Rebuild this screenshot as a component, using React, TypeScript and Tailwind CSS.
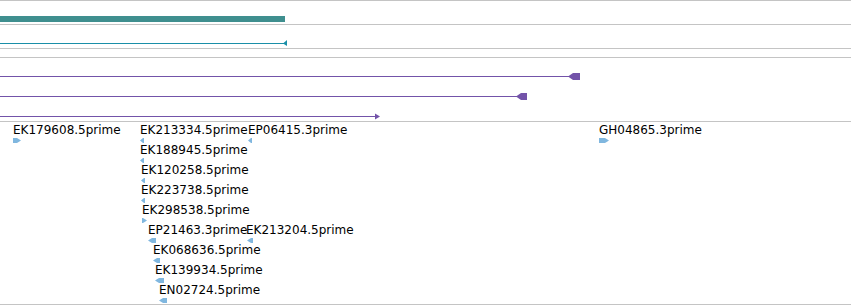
import React from 'react'

type Feat = { label: string; x: number; tx?: number; row: number; w: number; dir: 'l' | 'r' }

const feats: Feat[] = [
  { label: 'EK179608.5prime', x: 13, row: 0, w: 8, dir: 'r' },
  { label: 'EK213334.5prime', x: 140, row: 0, w: 4, dir: 'l' },
  { label: 'EP06415.3prime', x: 248, row: 0, w: 4, dir: 'l' },
  { label: 'GH04865.3prime', x: 599, row: 0, w: 10, dir: 'r' },
  { label: 'EK188945.5prime', x: 140, row: 1, w: 4, dir: 'l' },
  { label: 'EK120258.5prime', x: 141, row: 2, w: 4, dir: 'l' },
  { label: 'EK223738.5prime', x: 141, row: 3, w: 4, dir: 'l' },
  { label: 'EK298538.5prime', x: 142, row: 4, w: 5, dir: 'r' },
  { label: 'EP21463.3prime', x: 148, row: 5, w: 8, dir: 'l' },
  { label: 'EK213204.5prime', x: 247, tx: 246, row: 5, w: 6, dir: 'l' },
  { label: 'EK068636.5prime', x: 153, row: 6, w: 7, dir: 'l' },
  { label: 'EK139934.5prime', x: 155, row: 7, w: 9, dir: 'l' },
  { label: 'EN02724.5prime', x: 159, row: 8, w: 8, dir: 'l' },
]

// little strand glyph under each label
function glyph(f: Feat) {
  const y = 16 + f.row * 20
  const { x, w } = f
  const tip = Math.min(4, w - 1)
  const pts =
    f.dir === 'r'
      ? `${x},${y} ${x + w - tip},${y} ${x + w},${y + 2.5} ${x + w - tip},${y + 5} ${x},${y + 5}`
      : `${x + w},${y} ${x + tip},${y} ${x},${y + 2.5} ${x + tip},${y + 5} ${x + w},${y + 5}`
  return <polygon key={f.label + 'g'} points={pts} fill="#80b7df" />
}

export default function App() {
  return (
    <div className="w-[851px] h-[305px] bg-white overflow-hidden border-t border-[#c4c4c4]" style={{ fontFamily: '"DejaVu Sans", sans-serif' }}>
      {/* gene track */}
      <div className="relative h-[24px] border-b border-[#c4c4c4]">
        <div className="absolute left-0 top-[15px] w-[285px] h-[6px] bg-[#3f8f8f]" />
      </div>

      {/* transcript track */}
      <div className="relative h-[24px] border-b border-[#c4c4c4]">
        <svg className="absolute inset-0" width="851" height="23">
          <line x1="0" y1="18.5" x2="284" y2="18.5" stroke="#1a8fa8" strokeWidth="1" />
          <polygon points="283,18.5 287,15 287,21" fill="#1a8fa8" />
        </svg>
      </div>

      <div className="h-[8px]" />

      {/* mRNA track */}
      <div className="relative h-[65px] border-y border-[#c4c4c4]">
        <svg className="absolute inset-0" width="851" height="63">
          <line x1="0" y1="18.5" x2="570" y2="18.5" stroke="#7353a9" />
          <polygon points="568,18.5 573,15 580,15 580,22 573,22" fill="#7353a9" />
          <line x1="0" y1="38.5" x2="518" y2="38.5" stroke="#7353a9" />
          <polygon points="516,38.5 521,35 527,35 527,42 521,42" fill="#7353a9" />
          <line x1="0" y1="58.5" x2="377" y2="58.5" stroke="#7353a9" />
          <polygon points="375,55.5 380,58.5 375,61.5" fill="#7353a9" />
        </svg>
      </div>

      {/* EST track */}
      <div className="relative h-[183px] border-b border-[#c4c4c4]">
        <svg className="absolute inset-0" width="851" height="182">
          {feats.map(glyph)}
        </svg>
        {feats.map((f) => (
          <div
            key={f.label}
            className="absolute text-[12px] leading-[14px] text-black whitespace-nowrap"
            style={{ left: f.tx ?? f.x, top: 1 + f.row * 20 }}
          >
            {f.label}
          </div>
        ))}
      </div>
    </div>
  )
}
